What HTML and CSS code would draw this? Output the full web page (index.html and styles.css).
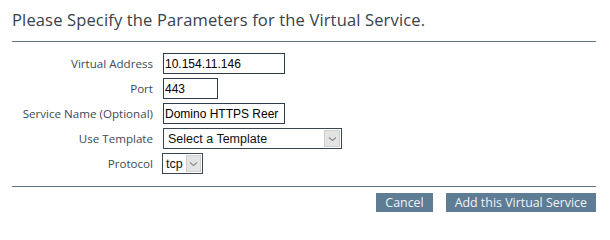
FILE: index.html
```html
<!DOCTYPE html>
<html>
<head>
<meta charset="utf-8">
<link rel="stylesheet" href="styles.css">
</head>
<body>
<div class="panel">
  <h1 class="title">Please Specify the Parameters for the Virtual Service.</h1>
  <div class="rule"></div>
  <form class="form">
    <label class="lbl">Virtual Address</label>
    <div class="field"><input class="inp w-addr" type="text" value="10.154.11.146"></div>
    <label class="lbl">Port</label>
    <div class="field"><input class="inp w-port" type="text" value="443"></div>
    <label class="lbl">Service Name (Optional)</label>
    <div class="field"><input class="inp w-name" type="text" value="Domino HTTPS Reer"></div>
    <label class="lbl">Use Template</label>
    <div class="field">
      <span class="sel w-tpl">
        <span class="sel-text">Select a Template</span>
        <span class="sel-btn"><svg width="9" height="6" viewBox="0 0 9 6"><path d="M1 1.5 L4.5 4.5 L8 1.5" fill="none" stroke="#8a8a8a" stroke-width="1.1"/></svg></span>
      </span>
    </div>
    <label class="lbl">Protocol</label>
    <div class="field">
      <span class="sel w-proto">
        <span class="sel-text proto-text">tcp</span>
        <span class="sel-btn proto-btn"><svg width="9" height="6" viewBox="0 0 9 6"><path d="M1 1.5 L4.5 4.5 L8 1.5" fill="none" stroke="#8a8a8a" stroke-width="1.1"/></svg></span>
      </span>
    </div>
  </form>
  <div class="rule rule2"></div>
  <div class="actions">
    <button class="btn" type="button">Cancel</button>
    <button class="btn" type="button">Add this Virtual Service</button>
  </div>
</div>
</body>
</html>
```
FILE: styles.css
```css
html, body {
  margin: 0;
  padding: 0;
  background: #ffffff;
}
body {
  font-family: "Open Sans", "Noto Sans", sans-serif;
  color: #333;
}
.panel {
  width: 584px;
  padding: 0 14px 0 12px;
}
.title {
  margin: 0;
  padding-top: 9px;
  height: 31px;
  box-sizing: border-box;
  font-size: 16.5px;
  font-weight: normal;
  color: #36424c;
  line-height: 22px;
  letter-spacing: 0.15px;
  white-space: nowrap;
}
.rule {
  height: 1px;
  background: #5f7282;
  margin-top: 10px;
}
.form {
  display: grid;
  grid-template-columns: 141px auto;
  column-gap: 10px;
  row-gap: 4px;
  margin: 11px 0 0 0;
}
.lbl {
  text-align: right;
  font-size: 11.6px;
  color: #3e4a55;
  line-height: 21px;
  height: 21px;
  white-space: nowrap;
}
.field {
  display: flex;
  height: 21px;
}
.inp {
  box-sizing: border-box;
  height: 21px;
  margin: 0;
  border: 1px solid #2f3d4a;
  padding: 0 0 0 1px;
  font-family: "Liberation Sans", Arial, sans-serif;
  font-size: 12px;
  color: #000;
  background: #fff;
  outline: none;
}
.w-addr { width: 122px; }
.w-port { width: 55px; }
.w-name { width: 122px; }
.sel {
  position: relative;
  box-sizing: border-box;
  height: 21px;
  border: 1px solid #3a4652;
  display: flex;
  align-items: center;
  background: #fff;
}
.w-tpl { width: 179px; }
.w-proto { width: 41px; margin-left: -1px; }
.sel-text {
  flex: 1;
  padding-left: 4px;
  font-family: "Liberation Sans", Arial, sans-serif;
  font-size: 12.5px;
  color: #111;
  white-space: nowrap;
}
.proto-text {
  padding-left: 3px;
}
.sel-btn {
  box-sizing: border-box;
  width: 16px;
  height: 17px;
  margin-right: 1px;
  background: #e4e4e4;
  border: 1px solid #cfcfcf;
  display: flex;
  align-items: center;
  justify-content: center;
  flex: none;
}
.proto-btn {
  width: 15px;
}
.rule2 {
  margin-top: 12px;
}
.actions {
  display: flex;
  justify-content: flex-end;
  gap: 13px;
  margin-top: 6px;
}
.btn {
  height: 19px;
  border: none;
  margin: 0;
  background: #5e7c94;
  color: #eef3f6;
  font-family: "Open Sans", "Noto Sans", sans-serif;
  font-size: 12.4px;
  padding: 0 9px;
  line-height: 19px;
}
```
